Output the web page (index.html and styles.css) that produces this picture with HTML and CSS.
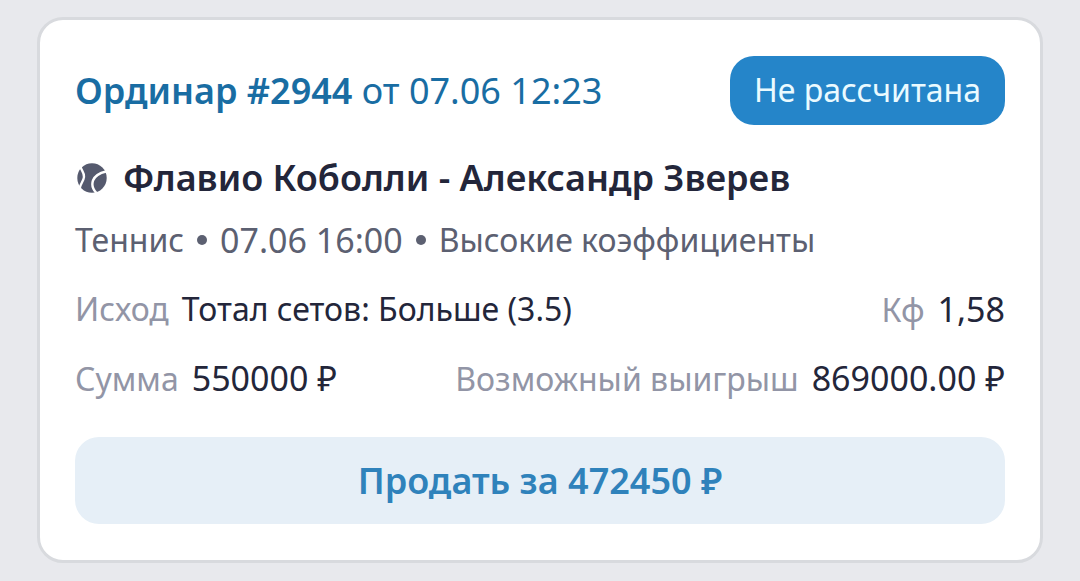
FILE: index.html
```html
<!DOCTYPE html>
<html lang="ru">
<head>
<meta charset="utf-8">
<meta name="viewport" content="width=device-width, initial-scale=1">
<title>Ординар #2944</title>
<link rel="stylesheet" href="styles.css">
</head>
<body>
<main class="bet-card">
  <header class="bet-header">
    <p class="bet-title"><strong>Ординар #2944</strong> <span class="bet-date">от 07.06 12:23</span></p>
    <span class="status">Не рассчитана</span>
  </header>
  <h1 class="match">
    <svg class="match-icon" viewBox="0 0 30 30" aria-hidden="true">
      <circle class="ball" cx="15" cy="15" r="14.7"/>
      <path class="seam" d="M3.500 3C4 8 7.500 9 7 14C6.500 18.500 3.500 20 2.500 26"/>
      <path class="seam" d="M29 8.500C22.500 10 18 12.500 16 17.500C14.500 22 15.500 26 19.500 30"/>
    </svg>
    <span>Флавио Коболли - Александр Зверев</span>
  </h1>
  <p class="meta"><span>Теннис</span><i class="dot"></i><span class="number">07.06 16:00</span><i class="dot"></i><span>Высокие коэффициенты</span></p>
  <dl class="details">
    <div class="row">
      <div class="pair"><dt>Исход</dt><dd>Тотал сетов: Больше (3.5)</dd></div>
      <div class="pair"><dt>Кф</dt><dd class="number">1,58</dd></div>
    </div>
    <div class="row">
      <div class="pair"><dt>Сумма</dt><dd class="number">550000 ₽</dd></div>
      <div class="pair"><dt>Возможный выигрыш</dt><dd class="number">869000.00 ₽</dd></div>
    </div>
  </dl>
  <button class="sell" type="button">Продать за 472450 ₽</button>
</main>
</body>
</html>
```
FILE: styles.css
```css
* { box-sizing: border-box; }
body {
  margin: 0;
  padding: 17px 37px 18px;
  background: #e8e9ed;
  color: #23263a;
  font-family: "Noto Sans", "Open Sans", sans-serif;
  font-size: 32px;
  line-height: 44px;
}
p, h1, dl, dd { margin: 0; }
.bet-card {
  padding: 36px 35px;
  border: 3px solid #d8dade;
  border-radius: 26px;
  background: #fff;
}
.bet-header, .row {
  display: flex;
  justify-content: space-between;
  align-items: center;
}
.bet-title { color: #196da3; font-size: 36px; white-space: nowrap; }
.bet-title strong, .match, .sell { font-weight: 600; }
.status {
  padding: 12px 24px 13px;
  border-radius: 24px;
  background: #2585c9;
  color: #eafaff;
  white-space: nowrap;
}
.match {
  display: flex;
  align-items: center;
  gap: 16px;
  margin-top: 31px;
  padding-left: 2px;
  font-size: 36px;
  white-space: nowrap;
}
.match-icon { flex: none; width: 30px; height: 30px; }
.ball { fill: #555a6e; }
.seam { fill: none; stroke: #fff; stroke-width: 2.4; }
.meta {
  display: flex;
  align-items: center;
  gap: 13px;
  margin-top: 18px;
  color: #5c6071;
  white-space: nowrap;
}
.dot { width: 10px; height: 10px; border-radius: 50%; background: #5c6071; }
.number { font-size: 34px; }
.details { display: grid; gap: 25px; margin-top: 25px; }
.pair { display: flex; align-items: baseline; gap: 13px; height: 44px; white-space: nowrap; }
dt { color: #9295a6; }
.sell {
  display: block;
  width: 100%;
  margin-top: 37px;
  padding: 21px;
  border: 0;
  border-radius: 24px;
  background: #e6eff7;
  color: #2f82bb;
  font-family: inherit;
  font-size: 36px;
  line-height: 45px;
}
```
